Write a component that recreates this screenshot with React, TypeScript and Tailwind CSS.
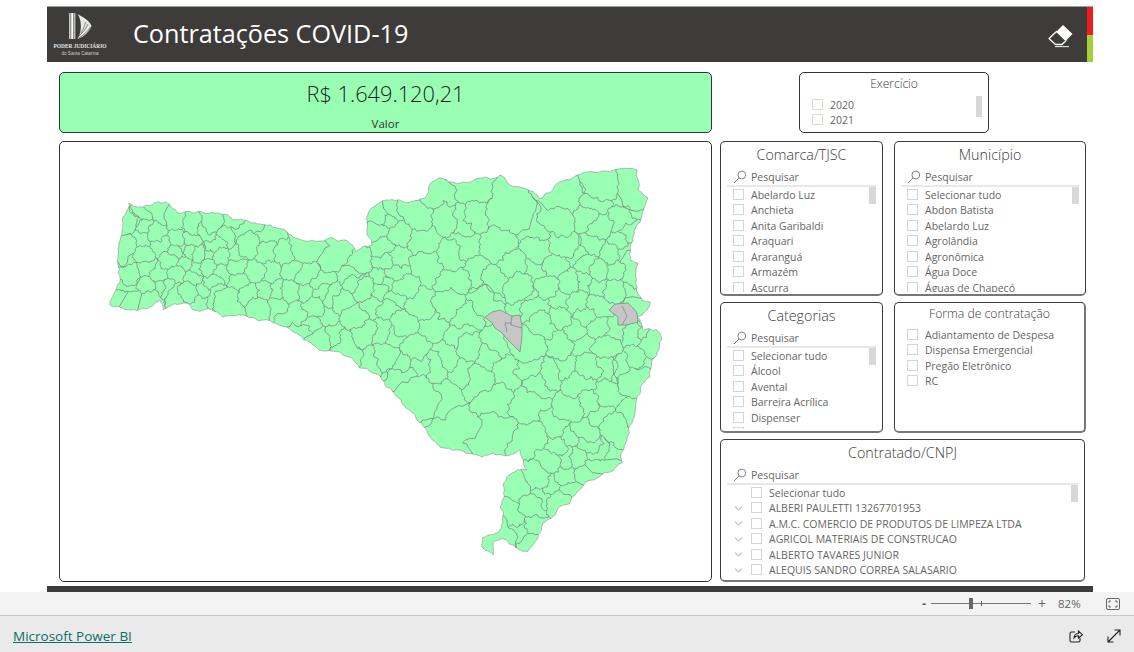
import React from "react";

type P = [number, number];

const outline: P[] = [
  [110,305],[115,292],[120,282],[118,265],[118,248],[122,232],[123,217],[129,203],[137,207],[147,205],[157,202],[165,202],[172,208],[178,213],[193,213],[210,213],[228,215],[233,220],[245,220],[253,223],[270,225],[285,230],[293,237],[312,240],[330,238],[345,240],[355,252],[372,245],[367,222],[370,210],[387,200],[397,200],[407,203],[425,198],[432,182],[438,178],[460,183],[463,182],[480,178],[500,175],[523,188],[540,199],[550,193],[577,175],[600,172],[637,170],[638,190],[648,198],[640,222],[630,247],[630,260],[638,263],[637,287],[642,300],[650,302],[647,310],[637,317],[643,330],[657,330],[662,338],[655,357],[652,360],[650,377],[640,387],[635,413],[627,440],[622,463],[613,471],[597,478],[577,492],[557,510],[543,523],[527,552],[517,548],[502,538],[493,542],[493,555],[482,547],[482,538],[488,535],[497,533],[503,523],[500,507],[503,485],[515,472],[527,470],[522,458],[520,450],[510,455],[493,453],[482,457],[457,450],[440,447],[430,437],[417,420],[405,407],[395,395],[385,385],[373,373],[350,357],[340,352],[313,345],[297,333],[287,327],[268,320],[257,320],[240,315],[223,317],[217,312],[193,310],[187,303],[163,310],[160,300],[142,308],[130,310],[120,307],
];

const z5: P[] = [[130,160],[190,165],[110,180],[90,185],[130,195],[120,235],[85,260],[125,285],[85,300],[95,330],[135,320],[95,375],[140,380],[100,410],[70,410],[150,410],[170,215],[185,255],[175,340],[180,380],[235,190],[285,205],[335,190],[375,180],[380,225],[420,215],[230,240],[275,240],[320,210],[345,255],[230,275],[250,270],[272,275],[295,280],[320,280],[215,300],[255,310],[290,325],[325,320],[360,295],[410,290],[445,260],[500,280],[505,225],[555,290],[600,280],[700,280],[580,330],[610,345],[660,365],[670,400],[490,395],[530,395],[570,395],[610,390],[230,340],[280,350],[335,370],[365,340],[410,315],[460,335],[510,335],[420,365],[230,400],[275,390],[310,385],[350,405],[395,420],[200,385],[300,430],[480,440],[530,430],[450,400],[590,460],[640,440],[690,410],[730,430],[770,365],[760,345],[790,385],[770,310],[850,355],[880,340],[840,395],[840,210],[850,175],[850,260],[860,300],[820,430],[760,470],[680,470],[640,500],[700,520],[620,530],[660,525],[730,540],[800,600],[790,520],[850,520],[880,420],[860,580]];
const z6: P[] = [[40,150],[115,165],[200,170],[245,175],[290,160],[275,95],[190,110],[370,170],[350,260],[470,215],[540,180],[560,130],[640,130],[675,70],[750,70],[750,130],[620,170],[660,200],[720,190],[540,250],[480,270],[600,280],[640,260],[715,240],[740,220],[690,280],[740,280],[625,310],[660,330],[700,330],[740,330],[50,220],[40,290],[145,320],[220,360],[290,340],[345,365],[400,320],[470,330],[520,320],[570,370],[610,370],[660,380],[700,390],[750,400],[320,400],[215,290],[250,260],[20,180],[130,240],[440,410],[420,380],[500,380],[540,420],[590,430],[650,440],[780,440],[310,430],[210,440],[120,440],[60,380],[20,370],[30,440],[70,490],[160,490],[250,470],[240,530],[350,560],[450,560],[500,490],[540,550],[620,470],[650,500],[610,550],[680,560],[760,520],[810,560],[40,530],[100,570],[200,590],[270,570],[320,590],[460,630],[550,610],[620,620],[680,620],[720,620],[770,600],[790,620],[120,620],[60,610],[780,510],[480,440],[530,470],[590,510],[700,510]];
const z7: P[] = [[50,80],[130,110],[230,50],[20,50],[100,20],[190,30],[320,40],[440,40],[540,70],[620,110],[700,50],[650,20],[290,130],[390,130],[420,60],[170,200],[290,210],[400,240],[470,200],[520,140],[560,130],[600,160],[650,200],[690,170],[640,280],[590,280],[550,210],[510,230],[470,260],[450,300],[500,290],[530,290],[555,250],[590,320],[555,350],[500,350],[420,360],[510,390],[450,380],[430,410],[350,390],[340,470],[400,440],[400,500],[360,510],[300,530],[400,540],[470,420]];

const seeds: P[] = [
  ...z5.map(([x, y]): P => [100 + x / 3, 160 + y / 3]),
  ...z6.map(([x, y]): P => [380 + x / 3, 160 + y / 3]),
  ...z7.map(([x, y]): P => [400 + x / 3, 360 + y / 3]),
];

function rng(a: number, b: number) {
  let s = (a * 7919 + b * 104729 + 12345) >>> 0;
  return () => {
    s = (s * 1664525 + 1013904223) >>> 0;
    return s / 4294967296 - 0.5;
  };
}

function wiggle(a: P, b: P, r: () => number, amp: number, depth: number, out: P[]) {
  if (depth === 0) {
    out.push(b);
    return;
  }
  const dx = b[0] - a[0];
  const dy = b[1] - a[1];
  const k = r() * amp;
  const m: P = [(a[0] + b[0]) / 2 - dy * k, (a[1] + b[1]) / 2 + dx * k];
  wiggle(a, m, r, amp, depth - 1, out);
  wiggle(m, b, r, amp, depth - 1, out);
}

function buildLines() {
  let d = "";
  type V = { x: number; y: number; e: number };
  seeds.forEach((si, i) => {
    let poly: V[] = [
      { x: 60, y: 142, e: -1 },
      { x: 711, y: 142, e: -1 },
      { x: 711, y: 581, e: -1 },
      { x: 60, y: 581, e: -1 },
    ];
    seeds.forEach((sj, j) => {
      if (i === j || poly.length === 0) return;
      const nx = sj[0] - si[0];
      const ny = sj[1] - si[1];
      const mx = (si[0] + sj[0]) / 2;
      const my = (si[1] + sj[1]) / 2;
      const side = (v: V) => (v.x - mx) * nx + (v.y - my) * ny;
      const next: V[] = [];
      poly.forEach((a, k) => {
        const b = poly[(k + 1) % poly.length];
        const sa = side(a);
        const sb = side(b);
        const inter = () => {
          const t = sa / (sa - sb);
          return { x: a.x + (b.x - a.x) * t, y: a.y + (b.y - a.y) * t };
        };
        if (sa <= 0) {
          next.push(a);
          if (sb > 0) next.push({ ...inter(), e: j });
        } else if (sb <= 0) {
          next.push({ ...inter(), e: a.e });
        }
      });
      poly = next;
    });
    poly.forEach((a, k) => {
      if (a.e <= i) return;
      const b = poly[(k + 1) % poly.length];
      const r = rng(i, a.e);
      const pts: P[] = [];
      wiggle([a.x, a.y], [b.x, b.y], r, 0.6, 4, pts);
      d += `M${a.x.toFixed(1)} ${a.y.toFixed(1)}` + pts.map((p) => `L${p[0].toFixed(1)} ${p[1].toFixed(1)}`).join("");
    });
  });
  return d;
}

function buildOutline() {
  const pts: P[] = [];
  outline.forEach((a, i) => {
    const b = outline[(i + 1) % outline.length];
    wiggle(a, b, rng(i, 77), 0.3, 3, pts);
  });
  return "M" + pts.map((p) => `${p[0].toFixed(1)} ${p[1].toFixed(1)}`).join("L") + "Z";
}

const outlinePath = buildOutline();
const innerLines = buildLines();

function StateMap() {
  return (
    <svg viewBox="60 142 651 439" className="block h-full w-full">
      <defs>
        <clipPath id="state">
          <path d={outlinePath} />
        </clipPath>
      </defs>
      <path d={outlinePath} fill="#99ffb3" stroke="#9aaaa0" strokeWidth="0.8" />
      <path d={innerLines} fill="none" stroke="#75857b" strokeWidth="0.75" clipPath="url(#state)" />
      <g fill="#c6c6c6" stroke="#7c7c7c" strokeWidth="0.7">
        <path d="M485 317L492 312L500 310L512 316L520 315L522 326L522 337L520 352L514 346L508 340L502 333L495 328L492 323Z" />
        <path d="M505 323L507 332M512 316L511 325L522 328M505 323L511 323" fill="none" />
        <path d="M609 310L615 304L628 303L634 309L637 313L638 322L627 325L618 325L618 317Z" />
        <path d="M622 306L627 316L622 325" fill="none" />
      </g>
    </svg>
  );
}

function Logo() {
  return (
    <div className="flex w-[60px] flex-col items-center text-white">
      <svg viewBox="0 0 26 27" className="block h-[27px] w-[26px]">
        <rect x="2" y="0" width="1.6" height="26" fill="#c8c8c8" />
        <rect x="4.2" y="0" width="2.2" height="26" fill="#ffffff" />
        <rect x="7" y="0" width="1.4" height="26" fill="#bdbdbd" />
        <path d="M10.5 1C16 4 23 8 24.5 13C22 19 17 24 10.5 26C14.5 20 15.5 8 10.5 1Z" fill="#e8e8e8" />
        <path d="M12 23C16 19 19 16 21 11M12 25C17 22 21 18 23.5 14M13.5 20C16 17 17.5 14 18.5 9" stroke="#3d3c3b" strokeWidth="0.6" fill="none" />
      </svg>
      <div className="mt-[2px] whitespace-nowrap font-['Liberation_Serif',serif] text-[5.4px] leading-[8px] font-bold text-[#e4e4e4]">
        PODER JUDICIÁRIO
      </div>
      <div className="whitespace-nowrap font-['Liberation_Sans',sans-serif] text-[4.6px] leading-[7px] text-[#cfcfcf]">
        do Santa Catarina
      </div>
    </div>
  );
}

function Eraser() {
  return (
    <svg viewBox="0 0 26 24" className="block h-[24px] w-[26px]">
      <path d="M16 1L25.5 10L19 16.5L9.5 7.5Z" fill="#ffffff" />
      <path d="M9.5 7.5L19 16.5L15 20.5H8.5L2 14.5Z" fill="#3d3c3b" stroke="#ffffff" strokeWidth="1.3" strokeLinejoin="round" />
      <path d="M8 22.6H22" stroke="#e6e6e6" strokeWidth="1.1" />
    </svg>
  );
}

function SearchGlyph() {
  return (
    <svg viewBox="0 0 14 14" className="block h-[14px] w-[14px]" fill="none" stroke="#777777" strokeWidth="0.9">
      <circle cx="8.8" cy="5" r="3.9" />
      <path d="M6 8L1 13" />
    </svg>
  );
}

function Chevron() {
  return (
    <svg viewBox="0 0 9 5" className="block h-[5px] w-[9px]" fill="none" stroke="#8a9a98" strokeWidth="0.9">
      <path d="M1 0.7L4.5 4L8 0.7" />
    </svg>
  );
}

function Box({ tone = "border-[#d0d6dc]" }: { tone?: string }) {
  return <span className={`mb-[1px] block h-[11px] w-[11px] shrink-0 border bg-white ${tone}`} />;
}

function Row({ label, chevron, indent, tone }: { label: string; chevron?: boolean; indent?: boolean; tone?: string }) {
  return (
    <div className="flex h-[15.5px] shrink-0 items-center whitespace-nowrap text-[10.5px] leading-none text-[#666666]">
      {indent && <span className="flex w-[18px] shrink-0 items-center pl-[1px]">{chevron && <Chevron />}</span>}
      <Box tone={tone} />
      <span className="ml-[7px]">{label}</span>
    </div>
  );
}

function Slicer({
  title,
  items,
  className,
  indent,
  hideSelectAllChevron,
}: {
  title: string;
  items: string[];
  className: string;
  indent?: boolean;
  hideSelectAllChevron?: boolean;
}) {
  return (
    <div className={`flex flex-col rounded-[5px] border border-b-2 border-[#3c3c3c] border-b-[#777777] bg-white ${className}`}>
      <div className="pt-[2px] text-center text-[14.3px] leading-[21px] font-light text-[#3a3a3a]">{title}</div>
      <div className="mx-[6px] mt-[4px] flex h-[18px] shrink-0 items-center gap-[4px] border-b-[2px] border-[#e8e8e8] pl-[6px] text-[10.5px] text-[#666666]">
        <SearchGlyph />
        <span className="pt-[1px]">Pesquisar</span>
      </div>
      <div className="relative mx-[6px] mb-[2px] min-h-0 flex-1 overflow-hidden pl-[6px]">
        {items.map((t, i) => (
          <Row key={i} label={t} indent={indent} chevron={!(hideSelectAllChevron && i === 0)} />
        ))}
        <span className="absolute top-0 right-0 h-[17px] w-[7px] bg-[#d8d8d8]" />
      </div>
    </div>
  );
}

const comarcas = ["Abelardo Luz", "Anchieta", "Anita Garibaldi", "Araquari", "Araranguá", "Armazém", "Ascurra"];
const municipios = ["Selecionar tudo", "Abdon Batista", "Abelardo Luz", "Agrolândia", "Agronômica", "Água Doce", "Águas de Chapecó"];
const categorias = ["Selecionar tudo", "Álcool", "Avental", "Barreira Acrílica", "Dispenser", ""];
const formas = ["Adiantamento de Despesa", "Dispensa Emergencial", "Pregão Eletrônico", "RC"];
const contratados = [
  "Selecionar tudo",
  "ALBERI PAULETTI 13267701953",
  "A.M.C. COMERCIO DE PRODUTOS DE LIMPEZA LTDA",
  "AGRICOL MATERIAIS DE CONSTRUCAO",
  "ALBERTO TAVARES JUNIOR",
  "ALEQUIS SANDRO CORREA SALASARIO",
];

export default function App() {
  return (
    <div className="flex h-[652px] w-[1134px] flex-col overflow-hidden bg-white font-['Open_Sans','Noto_Sans',sans-serif]">
      <div className="h-[592px] shrink-0 pt-[6px] pl-[47px]">
        <header className="flex h-[56px] w-[1046px] border-t border-[#a0a0a0]">
          <div className="flex w-[1040px] items-center bg-[#3d3c3b] pl-[3px]">
            <Logo />
            <h1 className="ml-[23px] pb-[2px] text-[25.2px] leading-none text-white">Contratações COVID-19</h1>
            <div className="mt-[3px] mr-[14px] ml-auto">
              <Eraser />
            </div>
          </div>
          <div className="flex w-[6px] flex-col">
            <span className="h-[28px] bg-[#ed1c24]" />
            <span className="flex-1 bg-[#a4d03a]" />
          </div>
        </header>

        <main className="mt-[10px] ml-[12px] flex gap-[8px]">
          <div className="flex w-[653px] flex-col gap-[8px]">
            <div className="flex h-[61px] flex-col items-center rounded-[5px] border border-[#333333] bg-[#99ffb3]">
              <div className="mt-[4px] text-[21.8px] leading-[34px] font-light text-[#222222]">R$ 1.649.120,21</div>
              <div className="mt-[6px] text-[11.5px] leading-[14px] text-[#333333]">Valor</div>
            </div>
            <div className="h-[441px] rounded-[5px] border border-[#333333] bg-white">
              <StateMap />
            </div>
          </div>

          <div className="flex w-[366px] flex-col">
            <div className="h-[61px] pl-[79px]">
              <div className="relative h-[61px] w-[190px] rounded-[5px] border border-[#333333] bg-white">
                <div className="pt-[2px] text-center text-[12px] leading-[18px] font-light text-[#3a3a3a]">Exercício</div>
                <div className="mt-[1px] pl-[12px]">
                  <div className="h-[3px]" />
                  <Row label="2020" tone="border-[#e8d6d2]" />
                  <Row label="2021" tone="border-[#e8d6d2]" />
                </div>
                <span className="absolute top-[23px] right-[6px] h-[21px] w-[6px] bg-[#d8d8d8]" />
              </div>
            </div>
            <div className="mt-[8px] flex gap-[11px]">
              <Slicer title="Comarca/TJSC" items={comarcas} className="h-[155px] w-[163px]" />
              <Slicer title="Município" items={municipios} className="h-[155px] w-[192px]" />
            </div>
            <div className="mt-[6px] flex gap-[11px]">
              <Slicer title="Categorias" items={categorias} className="h-[131px] w-[163px]" />
              <div className="h-[131px] w-[192px] rounded-[5px] border border-r-2 border-b-2 border-[#3c3c3c] border-r-[#777777] border-b-[#777777] bg-white">
                <div className="pt-[1px] text-center text-[12.2px] leading-[20px] font-light text-[#3a3a3a]">Forma de contratação</div>
                <div className="mt-[3px] pl-[12px]">
                  {formas.map((t) => (
                    <Row key={t} label={t} />
                  ))}
                </div>
              </div>
            </div>
            <div className="mt-[6px]">
              <Slicer title="Contratado/CNPJ" items={contratados} className="h-[143px] w-[365px]" indent hideSelectAllChevron />
            </div>
          </div>
        </main>

        <div className="mt-[4px] h-[6px] w-[1046px] bg-[#3d3c3b]" />
      </div>

      <div className="flex h-[24px] shrink-0 items-center justify-end border-b border-[#c9c9c9] bg-[#f3f3f3] pr-[14px] text-[11.5px] text-[#666666]">
        <span className="font-bold text-[#555555]">-</span>
        <div className="relative mr-[7px] ml-[5px] h-[1px] w-[100px] bg-[#777777]">
          <span className="absolute top-[-5px] left-[38px] h-[11px] w-[4px] bg-[#666666]" />
          <span className="absolute top-[-2px] left-[50px] h-[5px] w-[1px] bg-[#666666]" />
        </div>
        <span className="text-[14px] leading-none">+</span>
        <span className="ml-[12px] w-[48px]">82%</span>
        <svg viewBox="0 0 14 12" className="block h-[12px] w-[14px]" fill="none" stroke="#666666" strokeWidth="1">
          <rect x="0.5" y="0.5" width="13" height="11" rx="1.5" />
          <path d="M3 5V3H5M9 3H11V5M11 7V9H9M5 9H3V7" />
        </svg>
      </div>

      <footer className="flex flex-1 items-center justify-between bg-[#eaeaea] pt-[4px] pr-[13px] pl-[13px]">
        <a className="mt-[1px] text-[13.5px] font-medium text-[#0f6b6b] underline">Microsoft Power BI</a>
        <div className="flex items-center gap-[24px]">
          <svg viewBox="0 0 14 14" className="block h-[14px] w-[14px]" fill="none" stroke="#222222" strokeWidth="1.1">
            <path d="M6 3H2.5Q1 3 1 4.5V11.5Q1 13 2.5 13H9.5Q11 13 11 11.5V9" />
            <path d="M5 9C5 6 7 4.5 9.5 4.5V2L13.5 5.7L9.5 9V6.8C7.5 6.8 6 7.5 5 9Z" />
          </svg>
          <svg viewBox="0 0 14 14" className="block h-[14px] w-[14px]" fill="none" stroke="#222222" strokeWidth="1.1">
            <path d="M1 13L13 1M7.5 1H13V6.5M1 7.5V13H6.5" />
          </svg>
        </div>
      </footer>
    </div>
  );
}
